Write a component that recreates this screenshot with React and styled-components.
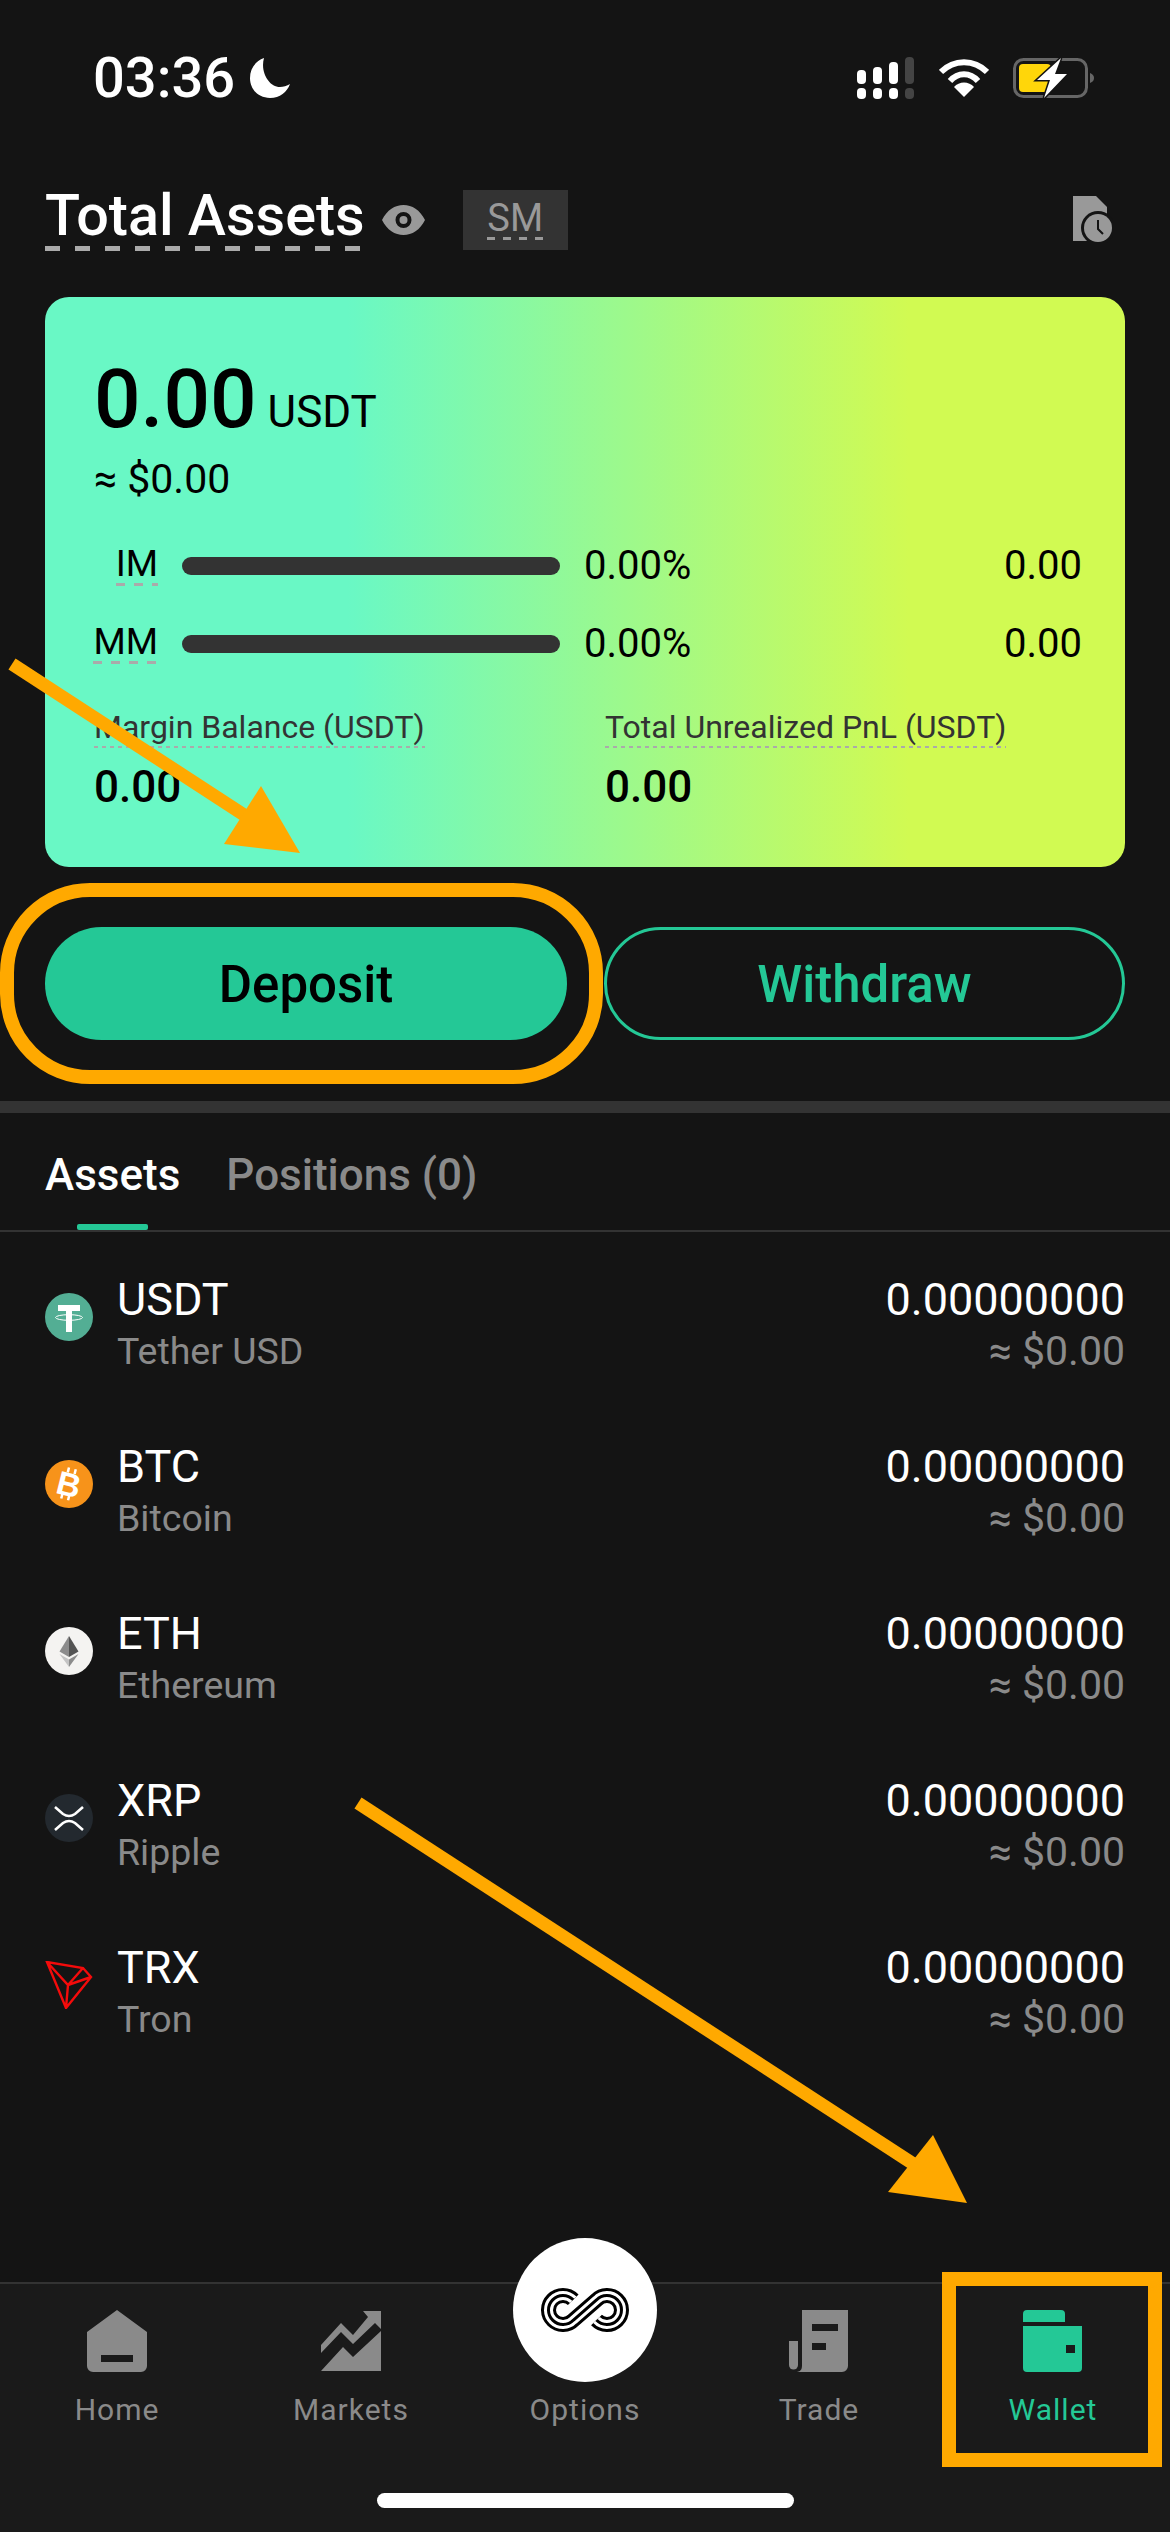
import React from 'react';
import styled, { createGlobalStyle } from 'styled-components';

const GlobalStyle = createGlobalStyle`
  html, body { margin: 0; padding: 0; background: #141414; }
  * { box-sizing: border-box; }
`;

const dashed = (color, dash, thick) => `
  background: linear-gradient(to right, ${color} 50%, transparent 50%) left bottom / ${dash * 2}px ${thick}px repeat-x;
`;

const Page = styled.div`
  position: relative;
  width: 1170px;
  height: 2532px;
  overflow: hidden;
  background: #141414;
  color: #fff;
  font-family: Roboto, "Liberation Sans", sans-serif;
  display: flex;
  flex-direction: column;
`;

const StatusBar = styled.div`
  height: 164px;
  padding: 54px 75px 0 93px;
  display: flex;
  justify-content: space-between;
  align-items: flex-start;
`;

const Clock = styled.div`
  display: flex;
  align-items: center;
  gap: 15px;
  font-size: 56px;
  line-height: 48px;
  font-weight: 500;
`;

const StatusIcons = styled.div`
  display: flex;
  align-items: center;
  gap: 24px;
  padding-top: 3px;
`;

const HeaderRow = styled.div`
  height: 133px;
  padding: 0 45px 22px;
  display: flex;
  align-items: center;
`;

const Title = styled.div`
  font-size: 57.5px;
  line-height: 54px;
  font-weight: 500;
  padding-bottom: 8px;
  ${dashed('#aaa', 15, 5)}
`;

const EyeWrap = styled.div`
  margin-left: 17px;
  display: flex;
`;

const SmBadge = styled.div`
  margin-left: 38px;
  width: 105px;
  height: 60px;
  background: #333;
  display: flex;
  align-items: center;
  justify-content: center;
  color: #999;
  font-size: 38px;
`;

const SmText = styled.span`
  line-height: 38px;
  padding-bottom: 3px;
  ${dashed('#999', 8, 3)}
`;

const HistoryWrap = styled.div`
  margin-left: auto;
  margin-right: 12px;
  display: flex;
`;

const Card = styled.div`
  margin: 0 45px;
  height: 570px;
  border-radius: 24px;
  background: linear-gradient(90deg, #69f8c5 28%, #d1fa52 80%);
  color: #000;
  padding: 62px 43px 0 49px;
`;

const BalanceRow = styled.div`
  display: flex;
  align-items: baseline;
  gap: 11px;
  height: 80px;
`;

const Balance = styled.span`
  font-size: 82px;
  line-height: 80px;
  font-weight: 500;
`;

const Unit = styled.span`
  font-size: 44px;
  line-height: 50px;
`;

const Approx = styled.div`
  margin-top: 18px;
  font-size: 41px;
  line-height: 44px;
`;

const MarginRows = styled.div`
  margin-top: 41px;
  display: flex;
  flex-direction: column;
  gap: 38px;
`;

const MarginRow = styled.div`
  display: grid;
  grid-template-columns: 64px 378px 1fr auto;
  column-gap: 24px;
  align-items: center;
  height: 40px;
  font-size: 40px;
`;

const MarginLabel = styled.div`
  justify-self: end;
  font-size: 37px;
  line-height: 36px;
  padding-bottom: 4px;
  ${dashed('#aaa', 9, 3)}
`;

const Track = styled.div`
  height: 18px;
  border-radius: 9px;
  background: #333;
`;

const Stats = styled.div`
  margin-top: 49px;
  display: grid;
  grid-template-columns: 511px 1fr;
`;

const StatLabel = styled.div`
  justify-self: start;
  width: fit-content;
  font-size: 32px;
  line-height: 36px;
  color: #333;
  padding-bottom: 3px;
  ${dashed('#aaa', 4, 2)}
`;

const StatValue = styled.div`
  margin-top: 15px;
  font-size: 44px;
  line-height: 48px;
  font-weight: 500;
`;

const Actions = styled.div`
  margin-top: 60px;
  padding: 0 45px;
  display: grid;
  grid-template-columns: 522px 521px;
  column-gap: 37px;
`;

const ActionButton = styled.div`
  height: 113px;
  border-radius: 57px;
  padding-top: 2px;
  display: flex;
  align-items: center;
  justify-content: center;
  font-size: 51px;
  font-weight: 500;
  background: ${p => (p.$filled ? '#24c896' : 'transparent')};
  color: ${p => (p.$filled ? '#000' : '#24c896')};
  border: ${p => (p.$filled ? 'none' : '3px solid #24c896')};
`;

const Band = styled.div`
  margin-top: 61px;
  height: 12px;
  background: #333;
`;

const Tabs = styled.div`
  height: 119px;
  padding: 0 45px;
  display: flex;
  gap: 46px;
  align-items: flex-start;
  border-bottom: 2px solid #333;
`;

const Tab = styled.div`
  position: relative;
  height: 117px;
  padding-top: 6px;
  display: flex;
  align-items: center;
  font-size: 44px;
  font-weight: 500;
  color: ${p => (p.$active ? '#fff' : '#8a8a8a')};
  &::after {
    content: '';
    display: ${p => (p.$active ? 'block' : 'none')};
    position: absolute;
    left: 32px;
    bottom: 0;
    width: 71px;
    height: 6px;
    border-radius: 2px;
    background: #24c896;
  }
`;

const AssetList = styled.div`
  padding: 44px 45px 0;
  display: flex;
  flex-direction: column;
`;

const AssetRow = styled.div`
  height: 167px;
  display: grid;
  grid-template-columns: 72px 1fr auto;
  grid-template-rows: 46px 57px;
  align-items: center;
`;

const CoinIcon = styled.div`
  grid-row: 1 / span 2;
  align-self: start;
  margin-top: 17px;
  width: 48px;
  height: 48px;
  display: flex;
`;

const Symbol = styled.div`
  font-size: 45px;
`;

const CoinName = styled.div`
  grid-column: 2;
  font-size: 37.5px;
  color: #8a8a8a;
`;

const Amount = styled.div`
  grid-column: 3;
  grid-row: 1;
  justify-self: end;
  font-size: 45px;
`;

const Fiat = styled.div`
  grid-column: 3;
  grid-row: 2;
  justify-self: end;
  font-size: 41px;
  color: #8a8a8a;
`;

const TabBar = styled.div`
  position: absolute;
  left: 0;
  right: 0;
  bottom: 0;
  height: 250px;
  background: #1a1a1a;
  border-top: 2px solid #333;
  display: grid;
  grid-template-columns: repeat(5, 234px);
`;

const NavItem = styled.div`
  position: relative;
  display: flex;
  flex-direction: column;
  align-items: center;
  padding-top: 25px;
  color: ${p => (p.$active ? '#24c896' : '#8a8a8a')};
  font-size: 30px;
  letter-spacing: 1px;
`;

const NavIcon = styled.div`
  height: 64px;
  display: flex;
  align-items: center;
`;

const NavLabel = styled.div`
  margin-top: 19px;
  line-height: 36px;
`;

const OptionsCircle = styled.div`
  position: absolute;
  left: 45px;
  top: -46px;
  width: 144px;
  height: 144px;
  border-radius: 50%;
  background: #fff;
  display: flex;
  align-items: center;
  justify-content: center;
`;

const HomeIndicator = styled.div`
  position: absolute;
  left: 377px;
  bottom: 24px;
  width: 417px;
  height: 15px;
  border-radius: 8px;
  background: #fff;
`;

const Ring = styled.div`
  position: absolute;
  left: 0;
  top: 883px;
  width: 603px;
  height: 201px;
  border: 14px solid #ffa900;
  border-radius: 90px;
`;

const WalletBox = styled.div`
  position: absolute;
  left: 942px;
  top: 2272px;
  width: 220px;
  height: 195px;
  border: 14px solid #ffa900;
`;

const ArrowLayer = styled.svg`
  position: absolute;
  left: 0;
  top: 0;
  pointer-events: none;
`;

const assets = [
  { symbol: 'USDT', name: 'Tether USD', icon: <TetherIcon /> },
  { symbol: 'BTC', name: 'Bitcoin', icon: <BitcoinIcon /> },
  { symbol: 'ETH', name: 'Ethereum', icon: <EthIcon /> },
  { symbol: 'XRP', name: 'Ripple', icon: <XrpIcon /> },
  { symbol: 'TRX', name: 'Tron', icon: <TronIcon /> },
];

function TetherIcon() {
  return (
    <svg width="48" height="48" viewBox="0 0 48 48">
      <circle cx="24" cy="24" r="24" fill="#53ae94" />
      <path d="M13 12h22v6h-8v4.500h-6V18h-8z M21 22h6v17h-6z" fill="#fff" />
      <ellipse cx="24" cy="24.500" rx="13.500" ry="2.800" fill="none" stroke="#fff" strokeWidth="1" />
    </svg>
  );
}

function BitcoinIcon() {
  return (
    <svg width="48" height="48" viewBox="0 0 48 48">
      <circle cx="24" cy="24" r="24" fill="#f7931a" />
      <g transform="rotate(14 24 24)">
        <text x="24" y="36" textAnchor="middle" fontFamily="Liberation Sans" fontWeight="700" fontSize="33" fill="#fff">B</text>
        <path d="M20 8v5M27 8v5M20 35v5M27 35v5" stroke="#fff" strokeWidth="2.500" />
      </g>
    </svg>
  );
}

function EthIcon() {
  return (
    <svg width="48" height="48" viewBox="0 0 48 48">
      <circle cx="24" cy="24" r="24" fill="#f4f3f1" />
      <path d="M24 9l-9.500 15.500L24 30z" fill="#8c8c8c" />
      <path d="M24 9l9.500 15.500L24 30z" fill="#545454" />
      <path d="M14.500 27L24 32.500V40z" fill="#c4c4c4" />
      <path d="M33.500 27L24 32.500V40z" fill="#8c8c8c" />
    </svg>
  );
}

function XrpIcon() {
  return (
    <svg width="48" height="48" viewBox="0 0 48 48">
      <circle cx="24" cy="24" r="24" fill="#23292f" />
      <path d="M10 13L18 20Q24 24 30 20L38 13M10 36L18 29Q24 25 30 29L38 36" fill="none" stroke="#fff" strokeWidth="2.600" />
    </svg>
  );
}

function TronIcon() {
  return (
    <svg width="48" height="48" viewBox="0 0 48 48">
      <path
        d="M2 1l36 6 8 9-25 31z M2 1l21 23 23-8 M23 24l-2 23 M38 7L23 24"
        fill="none"
        stroke="#f40b0b"
        strokeWidth="2.400"
        strokeLinejoin="miter"
      />
    </svg>
  );
}

function HomeGlyph() {
  return (
    <svg width="60" height="62" viewBox="0 0 60 62">
      <path
        fillRule="evenodd"
        d="M30 0L60 22V56a6 6 0 0 1-6 6H6a6 6 0 0 1-6-6V22z M14 45v7h32v-7z"
        fill="currentColor"
      />
    </svg>
  );
}

function MarketsGlyph() {
  return (
    <svg width="60" height="60" viewBox="0 0 60 60">
      <path d="M42 0H60V18L54 12 32 33 20 21 0 42V34L20 12 32 24 47 6z" fill="currentColor" />
      <path d="M60 20V60H0L22 36 32 46 60 20z" fill="currentColor" />
    </svg>
  );
}

function TradeGlyph() {
  return (
    <svg width="60" height="62" viewBox="0 0 60 62">
      <path
        fillRule="evenodd"
        d="M13 0H59V56a6 6 0 0 1-6 6H8c5-1 5-4 5-8z M23 14v7h26v-7z M23 33v7h14v-7z"
        fill="currentColor"
      />
      <path d="M0 31H9V55a4.500 4.500 0 0 1-9 0z" fill="currentColor" />
    </svg>
  );
}

function WalletGlyph() {
  return (
    <svg width="60" height="62" viewBox="0 0 60 62">
      <path d="M0 4a4 4 0 0 1 4-4H38a4 4 0 0 1 4 4V12H0z" fill="currentColor" />
      <path
        fillRule="evenodd"
        d="M0 16H59V58a4 4 0 0 1-4 4H4a4 4 0 0 1-4-4z M43 35v8h9v-8z"
        fill="currentColor"
      />
    </svg>
  );
}

// open band: both loop ends stop short of the crossing
const infinityPath = 'M32.250 11.750A14.500 14.500 0 1 0 32.500 32L55.500 12A14.500 14.500 0 1 1 55.500 32';

function InfinityLogo() {
  return (
    <svg width="88" height="44" viewBox="0 0 88 44">
      <path d={infinityPath} fill="none" stroke="#000" strokeWidth="15" />
      <path d={infinityPath} fill="none" stroke="#fff" strokeWidth="9" />
      <path d={infinityPath} fill="none" stroke="#000" strokeWidth="3" />
    </svg>
  );
}

const navItems = [
  { label: 'Home', icon: <HomeGlyph /> },
  { label: 'Markets', icon: <MarketsGlyph /> },
  { label: 'Options' },
  { label: 'Trade', icon: <TradeGlyph /> },
  { label: 'Wallet', icon: <WalletGlyph />, active: true },
];

export default function App() {
  return (
    <Page>
      <GlobalStyle />
      <StatusBar>
        <Clock>
          03:36
          <svg width="40" height="40" viewBox="0 0 40 40">
            <path d="M14 0C5 3 0 11 0 20c0 11 8 20 20 20 10 0 17-6 20-14-3 2-7 3-10 3C19 29 10 14 14 0z" fill="#fff" />
          </svg>
        </Clock>
        <StatusIcons>
          <svg width="58" height="42" viewBox="0 0 58 42">
            <rect x="0" y="13" width="9" height="14" rx="4" fill="#fff" />
            <rect x="16" y="10" width="9" height="17" rx="4" fill="#fff" />
            <rect x="32" y="5" width="9" height="22" rx="4" fill="#fff" />
            <rect x="48" y="0" width="9" height="27" rx="4" fill="#444" />
            <rect x="0" y="31" width="9" height="11" rx="4" fill="#fff" />
            <rect x="16" y="31" width="9" height="11" rx="4" fill="#fff" />
            <rect x="32" y="31" width="9" height="11" rx="4" fill="#fff" />
            <rect x="48" y="31" width="9" height="11" rx="4" fill="#444" />
          </svg>
          <svg width="50" height="38" viewBox="0 0 50 38">
            <path d="M2 13C15 0 35 0 48 13" fill="none" stroke="#fff" strokeWidth="6" />
            <path d="M11 22C19 13 31 13 39 22" fill="none" stroke="#fff" strokeWidth="6" />
            <path d="M25 38L15 28C20 22 30 22 35 28z" fill="#fff" />
          </svg>
          <svg width="82" height="40" viewBox="0 0 82 40">
            <rect x="1.500" y="1.500" width="72" height="37" rx="9" fill="none" stroke="#666" strokeWidth="3" />
            <rect x="6" y="6" width="32" height="28" rx="4" fill="#ffd60a" />
            <path d="M77 15c3 1 4 3 4 5s-1 4-4 5z" fill="#666" />
            <path d="M48 0L24 22H37L31 40 54 16H42z" fill="#fff" stroke="#141414" strokeWidth="3" paintOrder="stroke" />
          </svg>
        </StatusIcons>
      </StatusBar>

      <HeaderRow>
        <Title>Total Assets</Title>
        <EyeWrap>
          <svg width="43" height="30" viewBox="0 0 43 30">
            <path fillRule="evenodd" d="M0 15C5 5 13 0 21.500 0S38 5 43 15C38 25 30 30 21.500 30S5 25 0 15z M21.500 7a8 8 0 1 0 0 16 8 8 0 0 0 0-16z" fill="#999" />
            <circle cx="21.500" cy="15" r="4" fill="#999" />
          </svg>
        </EyeWrap>
        <SmBadge><SmText>SM</SmText></SmBadge>
        <HistoryWrap>
          <svg width="40" height="47" viewBox="0 0 40 47">
            <path d="M0 0H23L34 11V45H0z" fill="#999" />
            <circle cx="25" cy="32" r="17" fill="#141414" />
            <circle cx="25" cy="32" r="14" fill="#999" />
            <path d="M25 24V33L30 38" fill="none" stroke="#141414" strokeWidth="2" />
          </svg>
        </HistoryWrap>
      </HeaderRow>

      <Card>
        <BalanceRow>
          <Balance>0.00</Balance>
          <Unit>USDT</Unit>
        </BalanceRow>
        <Approx>≈ $0.00</Approx>
        <MarginRows>
          <MarginRow>
            <MarginLabel>IM</MarginLabel>
            <Track />
            <div>0.00%</div>
            <div>0.00</div>
          </MarginRow>
          <MarginRow>
            <MarginLabel>MM</MarginLabel>
            <Track />
            <div>0.00%</div>
            <div>0.00</div>
          </MarginRow>
        </MarginRows>
        <Stats>
          <div>
            <StatLabel>Margin Balance (USDT)</StatLabel>
            <StatValue>0.00</StatValue>
          </div>
          <div>
            <StatLabel>Total Unrealized PnL (USDT)</StatLabel>
            <StatValue>0.00</StatValue>
          </div>
        </Stats>
      </Card>

      <Actions>
        <ActionButton $filled>Deposit</ActionButton>
        <ActionButton>Withdraw</ActionButton>
      </Actions>

      <Band />

      <Tabs>
        <Tab $active>Assets</Tab>
        <Tab>Positions (0)</Tab>
      </Tabs>

      <AssetList>
        {assets.map(a => (
          <AssetRow key={a.symbol}>
            <CoinIcon>{a.icon}</CoinIcon>
            <Symbol>{a.symbol}</Symbol>
            <CoinName>{a.name}</CoinName>
            <Amount>0.00000000</Amount>
            <Fiat>≈ $0.00</Fiat>
          </AssetRow>
        ))}
      </AssetList>

      <TabBar>
        {navItems.map(item => (
          <NavItem key={item.label} $active={item.active}>
            {item.icon ? (
              <NavIcon>{item.icon}</NavIcon>
            ) : (
              <>
                <OptionsCircle><InfinityLogo /></OptionsCircle>
                <NavIcon />
              </>
            )}
            <NavLabel>{item.label}</NavLabel>
          </NavItem>
        ))}
        <HomeIndicator />
      </TabBar>

      <Ring />
      <WalletBox />
      <ArrowLayer width="1170" height="2532" viewBox="0 0 1170 2532">
        <path d="M12 664L255 822" stroke="#ffa900" strokeWidth="13" />
        <path d="M300 853L261 786 224 844z" fill="#ffa900" />
        <path d="M358 1803L915 2165" stroke="#ffa900" strokeWidth="13" />
        <path d="M967 2203L933 2135 888 2192z" fill="#ffa900" />
      </ArrowLayer>
    </Page>
  );
}
